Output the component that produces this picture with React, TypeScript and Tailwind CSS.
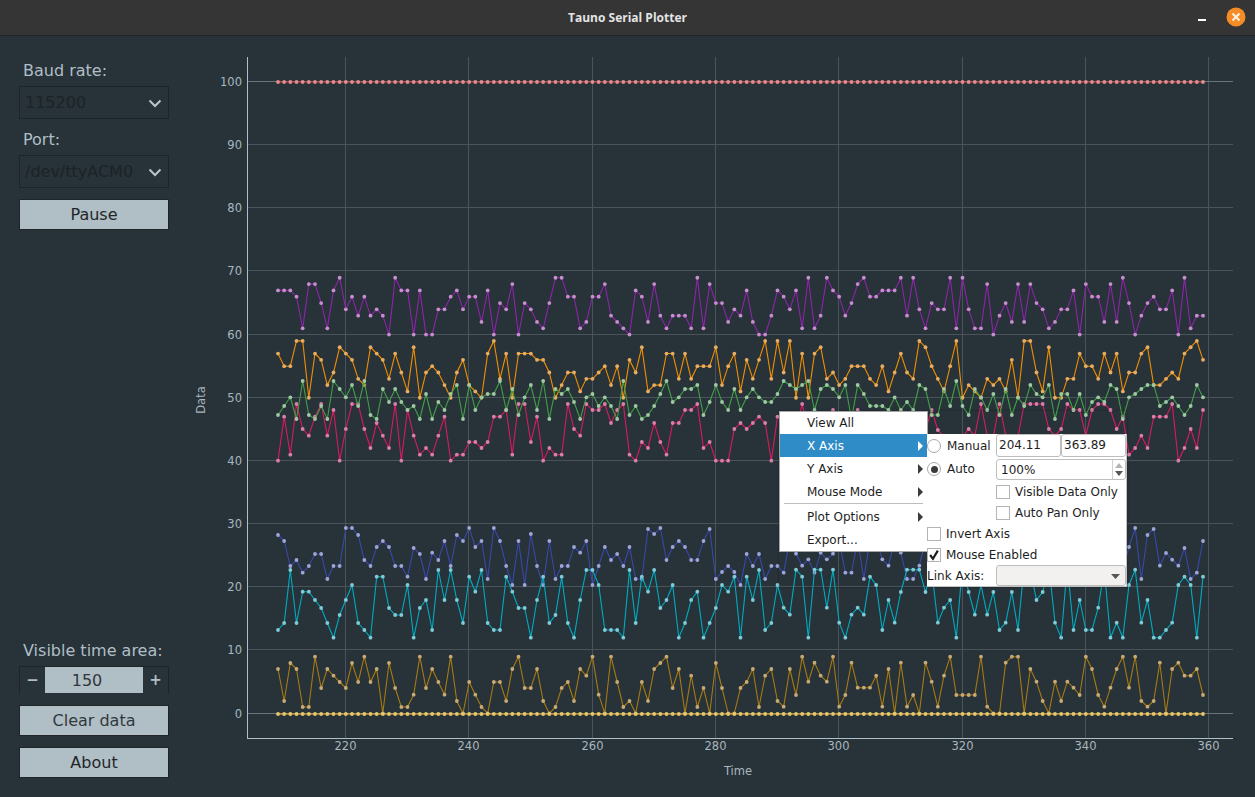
import React from "react";

const z = (base: number, arr: number[]) => arr.map((v) => base + v / 3);
const val = (arr: number[]) => arr.map((v) => 713.5 - 6.315 * v);

const purple = val([
  67,67,67,66,61,68,68,65,61,67,69,64,66,63,66,63,64,63,60,69,67,67,60,67,60,60,64,64,66,67,64,66,66,62,67,60,65,64,
  68,60,65,64,62,61,65,69,69,66,66,61,62,66,66,68,63,62,61,60,67,66,62,68,63,61,63,63,63,61,69,61,68,65,65,62,64,63,67,62,60,60,63,67,
  66,64,67,61,69,61,63,69,67,66,63,65,68,69,66,66,67,67,67,69,63,69,64,61,65,64,64,69,61,69,64,61,61,68,60,63,65,62,68,62,68,65,64,61,62,64,64,67,60,68,66,66,62,68,62,69,65,60,63,65,66,64,64,67,60,69,61,63,63,
]);
const orange = val([
  57,55,55,59,59,50,57,56,52,54,58,57,56,53,52,58,57,56,53,57,54,51,58,50,54,55,54,52,50,54,56,52,51,50,57,59,53,57,
  50,57,57,57,56,56,54,50,52,54,54,51,53,53,54,55,52,55,50,56,54,58,51,52,52,57,57,53,57,53,55,55,55,58,52,55,57,51,56,53,56,59,53,59,
  54,59,50,57,50,57,58,53,54,52,53,55,55,55,53,52,55,51,54,57,54,53,59,58,55,53,51,55,59,50,52,51,50,53,52,53,51,56,50,59,59,54,51,58,50,50,53,53,57,55,55,53,57,54,57,51,54,54,57,58,52,52,53,54,53,57,58,59,56,
]);
const green = z(260, [
  465,438,412,477,363,465,477,438,477,363,387,412,375,438,363,465,477,387,426,387,426,450,438,477,402,477,426,450,402,375,477,375,450,412,402,402,363,450,
  387,465,412,375,450,363,477,387,402,387,426,477,412,402,438,412,438,477,363,465,438,477,465,438,402,363,426,412,387,387,375,465,426,375,426,450,387,450,412,387,412,426,426,402,
  363,375,387,375,363,450,387,375,387,412,375,477,375,402,438,438,438,450,412,450,426,450,375,387,465,465,387,438,363,438,465,387,412,450,402,465,387,465,412,438,375,402,412,375,477,402,402,450,402,465,426,412,426,375,387,477,412,402,387,375,375,438,426,412,438,465,438,375,412,
]);
const pink = z(260, [
  602,470,584,432,507,527,470,432,527,450,602,507,432,432,507,564,489,527,564,432,602,450,527,584,564,584,527,470,602,584,584,546,546,564,546,470,470,450,
  584,432,432,546,470,602,564,584,584,432,507,527,432,450,450,432,489,450,432,584,602,546,564,489,546,584,489,489,450,450,432,564,546,602,602,602,507,489,507,489,470,489,602,470,
  490,510,510,432,510,510,510,510,450,510,510,510,450,510,510,510,510,510,510,510,510,510,510,510,450,510,530,530,530,530,507,527,432,527,530,432,527,530,530,432,432,432,432,507,527,507,432,450,450,527,450,432,432,450,507,470,584,564,527,564,470,470,470,432,602,564,507,564,450,
]);
const blue = [
  ...z(510, [
    75,93,168,150,188,168,132,132,207,168,168,54,54,75,150,168,111,93,111,168,168,200,114,132,207,128,150,93,168,75,93,54,111,93,207,54,93,168,
    225,93,225,72,168,225,93,207,168,168,111,128,93,225,168,111,150,132,168,111,207,207,57,72,54,150,111,93,111,150,150,93,57,207,186,168,186,225,132,168,132,207,168,168,
  ]),
  572.7,540,553.7,565.7,559.3,572.7,552.7,559.3,553.7,540,572.7,572.7,540,579,540,540,559.3,565.7,540,552.7,579,579,565.7,
  540,550,555,550,560,550,545,555,550,560,550,545,555,550,560,550,545,555,550,560,550,545,555,550,560,550,545,555,550,560,550,545,570,
  547,528,579,535,529,565.7,553,559.7,565.7,548,579,572.7,541,
];
const teal = [
  ...z(510, [
    360,339,180,339,245,245,270,294,339,383,315,270,225,339,360,383,200,200,294,315,315,225,383,294,270,360,180,270,180,270,339,200,245,180,339,360,360,200,
    245,294,294,383,270,200,339,315,200,339,383,270,180,180,225,360,360,360,383,180,339,200,245,180,294,270,225,383,339,270,245,383,339,294,225,245,200,383,200,270,180,360,339,225,
  ]),
  607.7,614.7,569.7,576.7,637.7,569.7,569.7,607.7,569.7,622.7,637.7,614.7,607.7,614.7,576.7,585,630,600,622.7,592,569.7,569.7,569.7,592,570,622.7,607.7,600,637.7,565,592,614.7,585,614.7,592,630,622.7,592,630,565,570,600,592,565,622.7,637.7,565,630,600,630,630,607.7,570,637.7,622.7,637.7,585,569.7,622.7,600,637.7,637.7,630,622.7,585,576.7,585,637.7,576.7,
];
const brown = [
  ...z(510, [
    477,573,459,477,591,591,440,534,477,497,516,534,459,516,440,516,477,610,459,534,591,591,554,440,534,477,516,554,440,573,610,516,554,591,610,516,516,573,
    477,440,534,534,477,573,610,591,534,516,573,477,497,440,554,610,440,516,591,573,610,516,573,477,459,440,534,477,610,497,591,534,610,459,534,610,610,534,516,477,591,497,477,573,
  ]),
  ...z(580, [
    380,267,345,230,305,248,287,305,230,380,345,248,323,323,323,287,380,267,400,248,380,345,400,248,305,380,287,230,345,345,345,345,230,380,400,400,248,230,230,400,267,305,363,400,305,363,305,323,345,230,267,345,380,323,267,230,323,230,363,380,363,248,400,267,248,287,287,267,345,
  ]),
];
const flat = (y: number) => Array.from({ length: 151 }, () => y);

const series = [
  { ys: flat(82), line: "#c63f42", dot: "#e58c8c" },
  { ys: purple, line: "#8e24aa", dot: "#c690cc" },
  { ys: pink, line: "#d81b60", dot: "#d981a8" },
  { ys: orange, line: "#f28f00", dot: "#e8ad62" },
  { ys: green, line: "#43a047", dot: "#a0c8a4" },
  { ys: blue, line: "#3949ab", dot: "#9fa6d6" },
  { ys: teal, line: "#00acc1", dot: "#80cbd6" },
  { ys: brown, line: "#a87a12", dot: "#c9aa74" },
  { ys: flat(714), line: "#e8b93a", dot: "#e8c66a" },
];

const xOf = (i: number) => 278 + i * 6.1667;
const gridXs = [220, 240, 260, 280, 300, 320, 340, 360];
const gridYs = [100, 90, 80, 70, 60, 50, 40, 30, 20, 10, 0];
const yOf = (v: number) => Math.round(713.5 - 6.315 * v) - 0.5;
const xTick = (t: number) => Math.round(xOf(t - 209)) - 0.5;

function Chart() {
  return (
    <svg viewBox="190 36 1065 761" className="w-[1065px] h-[761px] block" style={{ fontFamily: "'DejaVu Sans', sans-serif" }}>
      {gridXs.map((t) => (
        <line key={t} x1={xTick(t)} x2={xTick(t)} y1={57} y2={738} stroke="#4a5359" strokeWidth={1} />
      ))}
      {gridYs.map((v) => (
        <line key={v} x1={248} x2={1233} y1={yOf(v)} y2={yOf(v)} stroke={v === 0 || v === 100 ? "#6b747a" : "#4a5359"} strokeWidth={1} />
      ))}
      <line x1={247.5} x2={247.5} y1={57} y2={738.5} stroke="#b0bec5" strokeWidth={1} />
      <line x1={247} x2={1233} y1={738.5} y2={738.5} stroke="#b0bec5" strokeWidth={1} />
      {gridYs.map((v) => (
        <text key={v} x={242} y={yOf(v) + 4.5} textAnchor="end" fontSize={11.5} fill="#a9b7be">
          {v}
        </text>
      ))}
      {gridXs.map((t) => (
        <text key={t} x={xTick(t)} y={750} textAnchor="middle" fontSize={11.5} fill="#a9b7be">
          {t}
        </text>
      ))}
      <text x={738} y={775} textAnchor="middle" fontSize={11.5} fill="#a9b7be">
        Time
      </text>
      <text transform="translate(204.5 400) rotate(-90)" textAnchor="middle" fontSize={11.5} fill="#a9b7be">
        Data
      </text>
      {series.map((s, k) => (
        <g key={k}>
          <polyline
            fill="none"
            stroke={s.line}
            strokeWidth={1.1}
            points={s.ys.map((y, i) => `${xOf(i).toFixed(1)},${y.toFixed(1)}`).join(" ")}
          />
          {s.ys.map((y, i) => (
            <circle key={i} cx={xOf(i)} cy={y} r={1.9} fill={s.dot} />
          ))}
        </g>
      ))}
    </svg>
  );
}

const Chevron = () => (
  <svg width="14" height="9" viewBox="0 0 14 9" className="absolute right-[6px] top-[12px]">
    <path d="M1.5 1.5 L7 7 L12.5 1.5" fill="none" stroke="#b8c6cc" strokeWidth="2" />
  </svg>
);

const Combo = ({ text }: { text: string }) => (
  <div className="relative h-[33px] w-[150px] border border-[#1f2427] pl-[5px] text-[16px] leading-[31px] text-[#1e2326]">
    {text}
    <Chevron />
  </div>
);

const Btn = ({ text, light }: { text: string; light?: boolean }) => (
  <div
    className={`h-[31px] w-[150px] border border-[#1f2427] bg-[#b0bec5] text-center text-[16px] leading-[29px] ${
      light ? "text-[#31393e]" : "text-[#232629]"
    }`}
  >
    {text}
  </div>
);

const Arrow = ({ color = "#3a3a3a" }: { color?: string }) => (
  <svg width="5" height="10" viewBox="0 0 5 10" className="absolute right-[4px] top-[7px]">
    <path d="M0 0 L5 5 L0 10 Z" fill={color} />
  </svg>
);

const MenuItem = ({ label, arrow, active }: { label: string; arrow?: boolean; active?: boolean }) => (
  <div className={`relative h-[23px] pl-[27px] leading-[25px] ${active ? "bg-[#308cc6] text-white" : "text-[#1e1e1e]"}`}>
    {label}
    {arrow && <Arrow color={active ? "#ffffff" : "#3a3a3a"} />}
  </div>
);

const Radio = ({ on }: { on?: boolean }) => (
  <span className="flex h-[14px] w-[14px] items-center justify-center rounded-full border border-[#a8a8a8] bg-white">
    {on && <span className="h-[7px] w-[7px] rounded-full bg-[#3a3a3a]" />}
  </span>
);

const Check = ({ on }: { on?: boolean }) => (
  <span className="flex h-[14px] w-[14px] items-center justify-center border border-[#b4b4b4] bg-white">
    {on && (
      <svg width="12" height="12" viewBox="0 0 11 11">
        <path d="M2 5.5 L4.5 9 L9 1.5" fill="none" stroke="#1e1e1e" strokeWidth="2" />
      </svg>
    )}
  </span>
);

const Field = ({ text, w }: { text: string; w: string }) => (
  <div className={`${w} h-[23px] rounded-[3px] border border-[#bdbdbd] bg-white pl-[2px] leading-[21px]`}>{text}</div>
);

function ContextMenu() {
  return (
    <div className="absolute left-[779px] top-[411px] flex items-start text-[12px] shadow-[0_0_2px_rgba(0,0,0,0.35)]" style={{ fontFamily: "'DejaVu Sans', sans-serif" }}>
      <div className="w-[149px] border border-[#a6a6a6] bg-white">
        <div className="h-[22px] pl-[27px] leading-[23px] text-[#1e1e1e]">View All</div>
        <MenuItem label="X Axis" arrow active />
        <MenuItem label="Y Axis" arrow />
        <MenuItem label="Mouse Mode" arrow />
        <div className="mx-[4px] mb-[1px] h-[1px] bg-[#bdbdbd]" />
        <MenuItem label="Plot Options" arrow />
        <MenuItem label="Export..." />
      </div>
      <div className="mt-[23px] -ml-[1px] w-[200px] border-r border-b border-[#c2c2c2] bg-white text-[#1e1e1e]">
        <div className="flex h-[23px] items-center">
          <div className="flex w-[69px] items-center gap-[6px]">
            <Radio />
            <span>Manual</span>
          </div>
          <Field text="204.11" w="w-[65px]" />
          <Field text="363.89" w="w-[65px]" />
        </div>
        <div className="flex h-[24px] items-center">
          <div className="flex w-[69px] items-center gap-[6px]">
            <Radio on />
            <span>Auto</span>
          </div>
          <div className="relative h-[21px] w-[130px] rounded-[3px] border border-[#bdbdbd] bg-white pl-[4px] leading-[21px]">
            100%
            <div className="absolute right-0 top-0 flex h-full w-[13px] flex-col items-center justify-center gap-[3px] border-l border-[#d0d0d0]">
              <svg width="8" height="5" viewBox="0 0 8 5"><path d="M0 5 L4 0 L8 5 Z" fill="#b5b5b5" /></svg>
              <svg width="8" height="5" viewBox="0 0 8 5"><path d="M0 0 L4 5 L8 0 Z" fill="#555555" /></svg>
            </div>
          </div>
        </div>
        <div className="flex h-[21px] items-center gap-[5px] pl-[69px]">
          <Check />
          <span>Visible Data Only</span>
        </div>
        <div className="flex h-[21px] items-center gap-[5px] pl-[69px]">
          <Check />
          <span>Auto Pan Only</span>
        </div>
        <div className="flex h-[21px] items-center gap-[5px]">
          <Check />
          <span>Invert Axis</span>
        </div>
        <div className="flex h-[21px] items-center gap-[5px]">
          <Check on />
          <span>Mouse Enabled</span>
        </div>
        <div className="flex h-[21px] items-center">
          <span className="w-[69px]">Link Axis:</span>
          <div className="relative h-[21px] w-[130px] rounded-[3px] border border-[#bdbdbd] bg-[#f2f1ef]">
            <svg width="9" height="5" viewBox="0 0 9 5" className="absolute right-[5px] top-[8px]">
              <path d="M0 0 L4.5 5 L9 0 Z" fill="#555555" />
            </svg>
          </div>
        </div>
      </div>
    </div>
  );
}

export default function App() {
  return (
    <div className="relative flex h-[797px] w-[1255px] flex-col overflow-hidden bg-[#273239]" style={{ fontFamily: "'DejaVu Sans', sans-serif" }}>
      <div className="relative flex h-[36px] shrink-0 items-center justify-center border-b border-[#242424] bg-[#353535]">
        <span className="text-[12px] font-bold text-[#e4e4e4]" style={{ fontFamily: "'Open Sans', sans-serif" }}>
          Tauno Serial Plotter
        </span>
        <div className="absolute right-[49px] top-[19px] h-[2px] w-[8px] bg-white" />
        <svg width="20" height="20" viewBox="0 0 20 20" className="absolute right-[9px] top-[7px]">
          <circle cx="10" cy="10" r="9.5" fill="#f58c26" />
          <path d="M6.5 6.5 L13.5 13.5 M13.5 6.5 L6.5 13.5" stroke="#fdf0df" strokeWidth="2.2" />
        </svg>
      </div>
      <div className="flex flex-1">
        <div className="flex w-[190px] shrink-0 flex-col justify-between pb-[19px] pl-[19px]">
          <div className="pt-[22px]">
            <div className="h-[24px] pl-[4px] text-[16px] leading-[26px] text-[#b0bec5]">Baud rate:</div>
            <div className="mt-[4px]">
              <Combo text="115200" />
            </div>
            <div className="mt-[8px] h-[24px] pl-[4px] text-[16px] leading-[26px] text-[#b0bec5]">Port:</div>
            <div className="mt-[4px]">
              <Combo text="/dev/ttyACM0" />
            </div>
            <div className="mt-[11px]">
              <Btn text="Pause" />
            </div>
          </div>
          <div>
            <div className="h-[24px] pl-[4px] text-[16px] leading-[26px] text-[#b0bec5]">Visible time area:</div>
            <div className="mt-[4px] flex h-[28px] w-[150px] border-x border-t border-[#1f2427]">
              <span className="w-[25px] text-center text-[15px] font-bold leading-[26px] text-[#b0bec5]">−</span>
              <div className="mb-[1px] w-[98px] bg-[#b0bec5] pr-[14px] text-center text-[16px] leading-[28px] text-[#31363b]">150</div>
              <span className="flex-1 text-center text-[15px] font-bold leading-[26px] text-[#b0bec5]">+</span>
            </div>
            <div className="mt-[11px]">
              <Btn text="Clear data" light />
            </div>
            <div className="mt-[11px]">
              <Btn text="About" />
            </div>
          </div>
        </div>
        <Chart />
      </div>
      <ContextMenu />
    </div>
  );
}
